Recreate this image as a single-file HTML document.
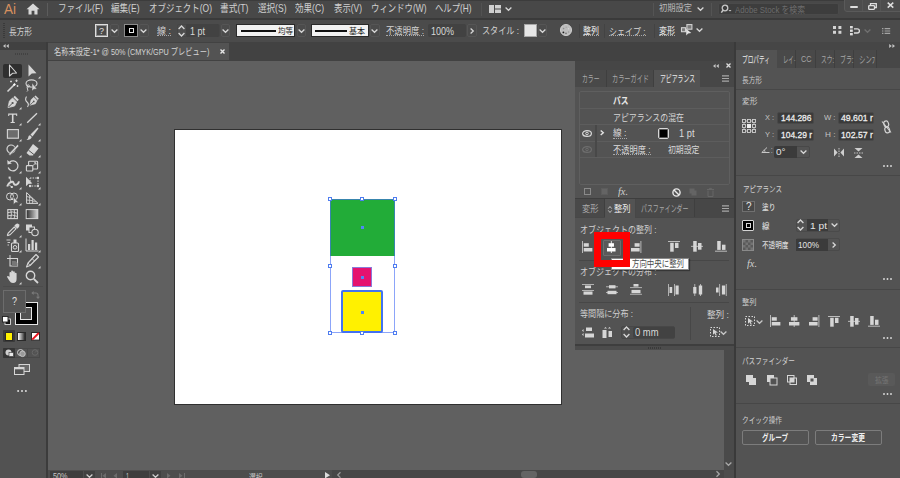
<!DOCTYPE html>
<html lang="ja"><head><meta charset="utf-8"><title>Illustrator</title>
<style>
*{box-sizing:border-box;margin:0;padding:0}
html,body{width:900px;height:478px;overflow:hidden;background:#606060}
body{position:relative;font-family:"Liberation Sans","Noto Sans CJK JP",sans-serif;font-size:10px;color:#d4d4d4}
.a{position:absolute}
.t{position:absolute;white-space:nowrap;transform-origin:0 50%;display:block}
svg{position:absolute;overflow:visible}
</style></head><body>

<div class="a" style="left:0px;top:0px;width:900px;height:20px;background:#484848;"></div>
<div class="a" style="left:0px;top:0px;width:900px;height:0.8px;background:#3c3c3c;"></div>
<div class="a" style="left:0px;top:18.3px;width:900px;height:1.5px;background:#3a3a3a;"></div>
<span class="t" style="left:4px;top:-0.68px;font-size:14.5px;line-height:21.75px;height:21.75px;color:#d8905f;transform:scaleX(0.9298);">Ai</span>
<svg style="left:26px;top:3px" width="14" height="12" viewBox="0 0 14 12"><path d="M7 0.5 L0.5 6.2 H2.5 V11.5 H5.6 V7.8 H8.4 V11.5 H11.5 V6.2 H13.5 Z" fill="#d8d8d8"/></svg>
<div class="a" style="left:47px;top:3.3px;width:1px;height:12.5px;background:#5c5c5c;"></div>
<div class="a" style="left:480.5px;top:3px;width:1px;height:13px;background:#525252;"></div>
<div class="a" style="left:553.5px;top:24px;width:1px;height:14px;background:#434343;"></div>
<span class="t" style="left:58px;top:0.62px;font-size:10.5px;line-height:15.75px;height:15.75px;color:#d0d0d0;transform:scaleX(0.8120);">ファイル(F)</span>
<span class="t" style="left:111px;top:0.62px;font-size:10.5px;line-height:15.75px;height:15.75px;color:#d0d0d0;transform:scaleX(0.8143);">編集(E)</span>
<span class="t" style="left:148.5px;top:0.62px;font-size:10.5px;line-height:15.75px;height:15.75px;color:#d0d0d0;transform:scaleX(0.8059);">オブジェクト(O)</span>
<span class="t" style="left:220px;top:0.62px;font-size:10.5px;line-height:15.75px;height:15.75px;color:#d0d0d0;transform:scaleX(0.8280);">書式(T)</span>
<span class="t" style="left:257.5px;top:0.62px;font-size:10.5px;line-height:15.75px;height:15.75px;color:#d0d0d0;transform:scaleX(0.8143);">選択(S)</span>
<span class="t" style="left:295px;top:0.62px;font-size:10.5px;line-height:15.75px;height:15.75px;color:#d0d0d0;transform:scaleX(0.8151);">効果(C)</span>
<span class="t" style="left:333.5px;top:0.62px;font-size:10.5px;line-height:15.75px;height:15.75px;color:#d0d0d0;transform:scaleX(0.8000);">表示(V)</span>
<span class="t" style="left:371px;top:0.62px;font-size:10.5px;line-height:15.75px;height:15.75px;color:#d0d0d0;transform:scaleX(0.7996);">ウィンドウ(W)</span>
<span class="t" style="left:435px;top:0.62px;font-size:10.5px;line-height:15.75px;height:15.75px;color:#d0d0d0;transform:scaleX(0.7921);">ヘルプ(H)</span>
<svg style="left:488.7px;top:3.6px" width="12" height="10" viewBox="0 0 12 10"><rect x="0" y="1" width="5" height="8" fill="#cfcfcf"/><rect x="6" y="1" width="6" height="3.5" fill="#cfcfcf"/><rect x="6" y="5.5" width="6" height="3.5" fill="#cfcfcf"/></svg>
<svg style="left:505.0px;top:6.6px" width="7" height="4" viewBox="0 0 7 4"><path d="M0.6 0.5 L3.5 3.3 L6.4 0.5" fill="none" stroke="#d8d8d8" stroke-width="1.25"/></svg>
<div class="a" style="left:653px;top:3px;width:1px;height:13px;background:#545454;"></div>
<span class="t" style="left:659px;top:1.85px;font-size:9px;line-height:13.5px;height:13.5px;color:#b8b8b8;transform:scaleX(0.9163);">初期設定</span>
<svg style="left:696.5px;top:7.199999999999999px" width="7" height="4" viewBox="0 0 7 4"><path d="M0.6 0.5 L3.5 3.3 L6.4 0.5" fill="none" stroke="#d8d8d8" stroke-width="1.25"/></svg>
<div class="a" style="left:711px;top:3px;width:1px;height:13px;background:#545454;"></div>
<div class="a" style="left:718px;top:2.8px;width:120.5px;height:12.2px;background:#3d3d3d;border-radius:2px;border:1px solid #4a4a4a"></div>
<svg style="left:721px;top:4px" width="11" height="10" viewBox="0 0 11 10"><circle cx="4" cy="4" r="2.8" fill="none" stroke="#c8c8c8" stroke-width="1.3"/><path d="M2 6.2 L0.3 8.6" stroke="#c8c8c8" stroke-width="1.5"/><path d="M7.5 6 L9 7.6 L10.5 6 Z" fill="#c8c8c8"/></svg>
<span class="t" style="left:735px;top:2.57px;font-size:9.5px;line-height:14.25px;height:14.25px;color:#6c6c6c;transform:scaleX(0.8234);">Adobe Stock を検索</span>
<div class="a" style="left:844px;top:-1px;width:57px;height:12.5px;background:#4d4d4d;border:1px solid #5a5a5a;border-radius:0 0 0 3px"></div>
<div class="a" style="left:862px;top:0px;width:1px;height:11px;background:#555;"></div>
<div class="a" style="left:880px;top:0px;width:1px;height:11px;background:#555;"></div>
<div class="a" style="left:850px;top:6.2px;width:7.5px;height:2.2px;background:#dedede;border-radius:1px"></div>
<svg style="left:867.5px;top:2.5px" width="9" height="7" viewBox="0 0 9 7"><path d="M2.5 2.3 V0.7 H8.3 V4.5 H6.5" fill="none" stroke="#dedede" stroke-width="1.3"/><rect x="0.7" y="2.6" width="5.8" height="3.8" rx="0.8" fill="none" stroke="#dedede" stroke-width="1.3"/></svg>
<svg style="left:887px;top:2px" width="7" height="6.2" viewBox="0 0 7 6.2"><path d="M0.7 0.6 L6.3 5.6 M6.3 0.6 L0.7 5.6" stroke="#dedede" stroke-width="1.5"/></svg>
<div class="a" style="left:0px;top:20px;width:900px;height:22px;background:#4b4b4b;"></div>
<div class="a" style="left:0px;top:41.6px;width:900px;height:1px;background:#3e3e3e;"></div>
<div class="a" style="left:3px;top:23px;width:2px;height:15px;background:repeating-linear-gradient(#3a3a3a 0 1px,transparent 1px 2px)"></div>
<span class="t" style="left:9px;top:24.57px;font-size:9.5px;line-height:14.25px;height:14.25px;color:#d0d0d0;transform:scaleX(0.8066);">長方形</span>
<div class="a" style="left:94.5px;top:23.8px;width:13.5px;height:13px;background:#4a4a4a;border:1px solid #dedede;box-shadow:inset 0 0 0 1px #8c8c8c"></div>
<span class="t" style="left:98.5px;top:23.57px;font-size:9.5px;line-height:14.25px;height:14.25px;color:#e0e0e0;transform:scaleX(0.9440);">?</span>
<div class="a" style="left:109.5px;top:24px;width:9.5px;height:13px;background:transparent;border:1px solid #555;border-radius:2px"></div>
<svg style="left:110.8px;top:29px" width="7" height="4" viewBox="0 0 7 4"><path d="M0.6 0.5 L3.5 3.3 L6.4 0.5" fill="none" stroke="#d8d8d8" stroke-width="1.25"/></svg>
<div class="a" style="left:124px;top:24px;width:14px;height:13px;background:#000;border:1px solid #8c8c8c"></div>
<div class="a" style="left:128.5px;top:28px;width:5px;height:5px;background:#000;border:1px solid #e8e8e8"></div>
<div class="a" style="left:139px;top:24px;width:9.5px;height:13px;background:transparent;border:1px solid #555;border-radius:2px"></div>
<svg style="left:140.3px;top:29px" width="7" height="4" viewBox="0 0 7 4"><path d="M0.6 0.5 L3.5 3.3 L6.4 0.5" fill="none" stroke="#d8d8d8" stroke-width="1.25"/></svg>
<span class="t" style="left:157px;top:24.55px;font-size:9px;line-height:13.5px;height:13.5px;color:#d4d4d4;transform:scaleX(0.9989);">線 :</span>
<div class="a" style="left:157px;top:34.8px;width:14px;height:0;border-top:1px dotted #a8a8a8"></div>
<div class="a" style="left:176.5px;top:24px;width:43px;height:13px;background:#4e4e4e;border:1px solid #464646;border-radius:2px"></div>
<svg style="left:177.8px;top:24.8px" width="7" height="12" viewBox="0 0 7 12"><path d="M0.6 4 L3.5 1 L6.4 4 M0.6 8 L3.5 11 L6.4 8" fill="none" stroke="#d8d8d8" stroke-width="1.3"/></svg>
<div class="a" style="left:186px;top:24px;width:33px;height:13px;background:#424242;border-radius:2px"></div>
<span class="t" style="left:190px;top:23.50px;font-size:10px;line-height:15.0px;height:15.0px;color:#d8d8d8;transform:scaleX(0.8989);">1 pt</span>
<div class="a" style="left:220.5px;top:24px;width:9.5px;height:13px;background:transparent;border:1px solid #555;border-radius:2px"></div>
<svg style="left:221.8px;top:29px" width="7" height="4" viewBox="0 0 7 4"><path d="M0.6 0.5 L3.5 3.3 L6.4 0.5" fill="none" stroke="#d8d8d8" stroke-width="1.25"/></svg>
<div class="a" style="left:236px;top:24px;width:59px;height:13px;background:#f2f2f2;border:1px solid #2a2a2a"></div>
<div class="a" style="left:241px;top:30px;width:35px;height:2px;background:#111;"></div>
<span class="t" style="left:278px;top:25.02px;font-size:8.5px;line-height:12.75px;height:12.75px;color:#222;transform:scaleX(0.8815);">均等</span>
<div class="a" style="left:296.5px;top:24px;width:9.5px;height:13px;background:transparent;border:1px solid #555;border-radius:2px"></div>
<svg style="left:297.8px;top:29px" width="7" height="4" viewBox="0 0 7 4"><path d="M0.6 0.5 L3.5 3.3 L6.4 0.5" fill="none" stroke="#d8d8d8" stroke-width="1.25"/></svg>
<div class="a" style="left:311px;top:24px;width:58px;height:13px;background:#f2f2f2;border:1px solid #2a2a2a"></div>
<div class="a" style="left:315px;top:30px;width:32px;height:1.5px;background:#111;"></div>
<span class="t" style="left:349px;top:25.02px;font-size:8.5px;line-height:12.75px;height:12.75px;color:#222;transform:scaleX(0.9403);">基本</span>
<div class="a" style="left:370px;top:24px;width:9.5px;height:13px;background:transparent;border:1px solid #555;border-radius:2px"></div>
<svg style="left:371.3px;top:29px" width="7" height="4" viewBox="0 0 7 4"><path d="M0.6 0.5 L3.5 3.3 L6.4 0.5" fill="none" stroke="#d8d8d8" stroke-width="1.25"/></svg>
<span class="t" style="left:385.5px;top:24.55px;font-size:9px;line-height:13.5px;height:13.5px;color:#d4d4d4;transform:scaleX(0.9265);">不透明度 :</span>
<div class="a" style="left:385.5px;top:34.8px;width:38.0px;height:0;border-top:1px dotted #a8a8a8"></div>
<div class="a" style="left:428px;top:24px;width:38px;height:13px;background:#424242;border-radius:2px"></div>
<span class="t" style="left:431px;top:23.50px;font-size:10px;line-height:15.0px;height:15.0px;color:#d8d8d8;transform:scaleX(0.8992);">100%</span>
<div class="a" style="left:467px;top:24px;width:10px;height:13px;background:transparent;border:1px solid #555;border-radius:2px"></div>
<svg style="left:470.3px;top:28px" width="4" height="6" viewBox="0 0 4 6"><path d="M0.6 0.5 L3.3 3 L0.6 5.5" fill="none" stroke="#d8d8d8" stroke-width="1.25"/></svg>
<span class="t" style="left:482px;top:23.88px;font-size:9.5px;line-height:14.25px;height:14.25px;color:#d4d4d4;transform:scaleX(0.8549);">スタイル :</span>
<div class="a" style="left:523.6px;top:24px;width:13.2px;height:13px;background:#e6e6e6;border:1px solid #a8a8a8"></div>
<div class="a" style="left:537.8px;top:24px;width:9.5px;height:13px;background:transparent;border:1px solid #555;border-radius:2px"></div>
<svg style="left:539.1px;top:29px" width="7" height="4" viewBox="0 0 7 4"><path d="M0.6 0.5 L3.5 3.3 L6.4 0.5" fill="none" stroke="#d8d8d8" stroke-width="1.25"/></svg>
<svg style="left:560px;top:24px" width="12" height="12" viewBox="0 0 12 12"><circle cx="6" cy="6" r="5.6" fill="#bdbdbd" stroke="#dadada" stroke-width="0.8"/><circle cx="3.4" cy="8.4" r="0.9" fill="#1c1c1c"/><circle cx="6" cy="9.4" r="0.8" fill="#6e6e6e"/><circle cx="8.6" cy="8" r="0.8" fill="#9a9a9a"/><circle cx="3.6" cy="4.6" r="0.8" fill="#8e8e8e"/><circle cx="6.2" cy="3.2" r="0.8" fill="#a8a8a8"/><circle cx="8.6" cy="4.8" r="0.7" fill="#d8d8d8"/></svg>
<span class="t" style="left:583px;top:25.15px;font-size:9px;line-height:13.5px;height:13.5px;color:#dcdcdc;font-weight:500;transform:scaleX(0.8881);">整列</span>
<div class="a" style="left:583px;top:35px;width:16px;height:0;border-top:1px dotted #a8a8a8"></div>
<span class="t" style="left:609px;top:24.57px;font-size:9.5px;line-height:14.25px;height:14.25px;color:#d8d8d8;transform:scaleX(0.8433);">シェイプ :</span>
<div class="a" style="left:609px;top:35px;width:36.5px;height:0;border-top:1px dotted #a8a8a8"></div>
<span class="t" style="left:659px;top:25.15px;font-size:9px;line-height:13.5px;height:13.5px;color:#dcdcdc;font-weight:500;transform:scaleX(0.8881);">変形</span>
<div class="a" style="left:659px;top:35px;width:16px;height:0;border-top:1px dotted #a8a8a8"></div>
<div class="a" style="left:578.5px;top:24px;width:1px;height:14px;background:#434343;"></div>
<div class="a" style="left:603.5px;top:24px;width:1px;height:14px;background:#434343;"></div>
<div class="a" style="left:654px;top:24px;width:1px;height:14px;background:#434343;"></div>
<svg style="left:681px;top:24.4px" width="11.5" height="11.5" viewBox="0 0 11.5 11.5"><rect x="0.5" y="3.7" width="4" height="4" fill="#7a7a7a" stroke="#d2d2d2" stroke-width="1.1"/><rect x="5.9" y="0.6" width="5" height="4.6" fill="#7a7a7a" stroke="#d2d2d2" stroke-width="1.1"/><path d="M5 4.8 L5.3 11.4 L7.1 9.6 L10.3 9.1 Z" fill="#e2e2e2"/></svg>
<svg style="left:695.5px;top:28.3px" width="7" height="4" viewBox="0 0 7 4"><path d="M0.6 0.5 L3.5 3.3 L6.4 0.5" fill="none" stroke="#d8d8d8" stroke-width="1.25"/></svg>
<svg style="left:833px;top:26.2px" width="8.4" height="7.8" viewBox="0 0 8.4 7.8"><rect x="0" y="0" width="3" height="3" fill="#d4d4d4"/><rect x="5.4" y="0" width="3" height="3" fill="#d4d4d4"/><rect x="0" y="4.8" width="3" height="3" fill="#d4d4d4"/><rect x="5.4" y="4.8" width="3" height="3" fill="#d4d4d4"/></svg>
<svg style="left:849.7px;top:25.8px" width="10" height="9.4" viewBox="0 0 10 9.4"><rect x="0" y="0" width="2.8" height="2.4" fill="#dcdcdc"/><rect x="0" y="3.5" width="2.8" height="2.4" fill="#dcdcdc"/><rect x="0" y="7" width="2.8" height="2.4" fill="#dcdcdc"/><path d="M4 2.8 H7.2 Q9.4 2.8 9.4 4.9 T7.2 7 H4" fill="none" stroke="#dcdcdc" stroke-width="1.3"/></svg>
<svg style="left:863.5px;top:28.5px" width="7" height="4" viewBox="0 0 7 4"><path d="M0.6 0.5 L3.5 3.3 L6.4 0.5" fill="none" stroke="#707070" stroke-width="1.25"/></svg>
<svg style="left:882px;top:27.6px" width="8.2" height="6" viewBox="0 0 8.2 6"><path d="M0 0.6 H1.4 M2.6 0.6 H8.2 M0 3 H1.4 M2.6 3 H8.2 M0 5.4 H1.4 M2.6 5.4 H8.2" stroke="#a4a4a4" stroke-width="1.1"/></svg>
<div class="a" style="left:46px;top:42px;width:690px;height:19px;background:#424242;"></div>
<div class="a" style="left:47.5px;top:42.5px;width:181.5px;height:17.5px;background:#535353;"></div>
<span class="t" style="left:54px;top:45.95px;font-size:9px;line-height:13.5px;height:13.5px;color:#d4d4d4;transform:scaleX(0.8071);">名称未設定-1* @ 50% (CMYK/GPU プレビュー)</span>
<svg style="left:219.8px;top:49.1px" width="5" height="5" viewBox="0 0 5 5"><path d="M0.5 0.5 L4.5 4.5 M4.5 0.5 L0.5 4.5" stroke="#e6e6e6" stroke-width="1.4"/></svg>
<div class="a" style="left:174px;top:129px;width:388px;height:276px;background:#fff;border:1px solid #303030"></div>
<div class="a" style="left:329.5px;top:199px;width:65.3px;height:57px;background:#22ac38;"></div>
<div class="a" style="left:351.6px;top:267px;width:20.8px;height:20.3px;background:#e5126f;border:1px solid #8a7ad8"></div>
<div class="a" style="left:340.8px;top:290.4px;width:42px;height:42.4px;background:#fff100;border:2px solid #4274f0;border-radius:2px"></div>
<div class="a" style="left:329.5px;top:199px;width:65.5px;height:134px;background:transparent;border:1px solid rgba(70,110,245,0.62)"></div>
<div class="a" style="left:328px;top:197px;width:4px;height:4px;background:#fff;border:1px solid #4f7df0"></div>
<div class="a" style="left:360px;top:197px;width:4px;height:4px;background:#fff;border:1px solid #4f7df0"></div>
<div class="a" style="left:392.5px;top:197px;width:4px;height:4px;background:#fff;border:1px solid #4f7df0"></div>
<div class="a" style="left:328px;top:264px;width:4px;height:4px;background:#fff;border:1px solid #4f7df0"></div>
<div class="a" style="left:392.5px;top:264px;width:4px;height:4px;background:#fff;border:1px solid #4f7df0"></div>
<div class="a" style="left:328px;top:330.5px;width:4px;height:4px;background:#fff;border:1px solid #4f7df0"></div>
<div class="a" style="left:360px;top:330.5px;width:4px;height:4px;background:#fff;border:1px solid #4f7df0"></div>
<div class="a" style="left:392.5px;top:330.5px;width:4px;height:4px;background:#fff;border:1px solid #4f7df0"></div>
<div class="a" style="left:360.5px;top:226.0px;width:3px;height:3px;background:#4f86f7;"></div>
<div class="a" style="left:360.5px;top:275.5px;width:3px;height:3px;background:#4f86f7;"></div>
<div class="a" style="left:360.5px;top:310.5px;width:3px;height:3px;background:#4f86f7;"></div>
<div class="a" style="left:723.5px;top:349px;width:10px;height:129px;background:#4a4a4a;"></div>
<svg style="left:725.0px;top:462px" width="7" height="4" viewBox="0 0 7 4"><path d="M0.6 0.5 L3.5 3.3 L6.4 0.5" fill="none" stroke="#a8a8a8" stroke-width="1.25"/></svg>
<div class="a" style="left:47px;top:469.5px;width:687px;height:8.5px;background:#4d4d4d;"></div>
<div class="a" style="left:332px;top:469.5px;width:391.5px;height:8.5px;background:#474747;"></div>
<div class="a" style="left:521px;top:471px;width:16px;height:7px;background:#646464;border-radius:3px"></div>
<div class="a" style="left:50px;top:471px;width:33px;height:7px;background:#3e3e3e;"></div>
<span class="t" style="left:52.5px;top:469.62px;font-size:8.5px;line-height:12.75px;height:12.75px;color:#c8c8c8;transform:scaleX(0.8522);">50%</span>
<div class="a" style="left:84px;top:471px;width:10.5px;height:7px;background:#414141;"></div>
<svg style="left:85.8px;top:474.3px" width="7" height="4" viewBox="0 0 7 4"><path d="M0.6 0.5 L3.5 3.3 L6.4 0.5" fill="none" stroke="#d0d0d0" stroke-width="1.25"/></svg>
<div class="a" style="left:123px;top:471px;width:26px;height:7px;background:#3e3e3e;"></div>
<span class="t" style="left:126px;top:469.62px;font-size:8.5px;line-height:12.75px;height:12.75px;color:#c8c8c8;transform:scaleX(0.6337);">1</span>
<div class="a" style="left:150px;top:471px;width:10.5px;height:7px;background:#414141;"></div>
<svg style="left:151.8px;top:474.3px" width="7" height="4" viewBox="0 0 7 4"><path d="M0.6 0.5 L3.5 3.3 L6.4 0.5" fill="none" stroke="#d0d0d0" stroke-width="1.25"/></svg>
<span class="t" style="left:248.5px;top:470.52px;font-size:8.5px;line-height:12.75px;height:12.75px;color:#c8c8c8;transform:scaleX(0.7934);">選択</span>
<svg style="left:324.5px;top:472px" width="5" height="6" viewBox="0 0 5 6"><path d="M0 0 L5 3.2 L0 6.4 Z" fill="#dcdcdc"/></svg>
<svg style="left:336.5px;top:472px" width="4" height="6" viewBox="0 0 4 6"><path d="M3.5 0.3 L0.7 3 L3.5 5.7" fill="none" stroke="#9a9a9a" stroke-width="1.2"/></svg>
<svg style="left:715.5px;top:471px" width="4" height="6" viewBox="0 0 4 6"><path d="M0.5 0.3 L3.3 3 L0.5 5.7" fill="none" stroke="#a8a8a8" stroke-width="1.2"/></svg>
<svg style="left:100.5px;top:472.5px" width="6" height="5.5" viewBox="0 0 6 5.5"><path d="M5 0 L1.5 2.75 L5 5.5 Z" fill="#6c6c6c"/></svg>
<svg style="left:112px;top:472.5px" width="6" height="5.5" viewBox="0 0 6 5.5"><path d="M5 0 L1.5 2.75 L5 5.5 Z" fill="#6c6c6c"/></svg>
<svg style="left:166px;top:472.5px" width="6" height="5.5" viewBox="0 0 6 5.5"><path d="M1 0 L4.5 2.75 L1 5.5 Z" fill="#6c6c6c"/></svg>
<svg style="left:177.5px;top:472.5px" width="6" height="5.5" viewBox="0 0 6 5.5"><path d="M1 0 L4.5 2.75 L1 5.5 Z" fill="#6c6c6c"/></svg>
<div class="a" style="left:100.5px;top:472.5px;width:1.2px;height:5.5px;background:#6c6c6c;"></div>
<div class="a" style="left:184px;top:472.5px;width:1.2px;height:5.5px;background:#6c6c6c;"></div>
<div class="a" style="left:0px;top:42px;width:46px;height:436px;background:#525252;"></div>
<div class="a" style="left:46px;top:42px;width:1.5px;height:436px;background:#3c3c3c;"></div>
<div class="a" style="left:0px;top:42px;width:46px;height:7.5px;background:#414141;"></div>
<svg style="left:3px;top:44px" width="6" height="4" viewBox="0 0 6 4"><path d="M2.6 0 V4 L0 2 Z M5.8 0 V4 L3.2 2 Z" fill="#c4c4c4"/></svg>
<div class="a" style="left:15px;top:53px;width:13px;height:2px;background:repeating-linear-gradient(90deg,#424242 0 1px,transparent 1px 2px)"></div>
<div class="a" style="left:3px;top:63.5px;width:18.5px;height:14.5px;background:#2f2f2f;border-radius:2px"></div>
<svg style="left:4.5px;top:62.5px" width="16" height="16" viewBox="0 0 16 16"><path d="M4.5 2 V13 L7.5 10.3 L11.5 10 Z" fill="none" stroke="#d6d6d6" stroke-width="1.1" stroke-linejoin="round"/></svg>
<svg style="left:24px;top:62.5px" width="16" height="16" viewBox="0 0 16 16"><path d="M4.5 1.5 V13.5 L7.8 10.5 L12.5 10.2 Z" fill="#d6d6d6"/></svg>
<svg style="left:38.3px;top:75.5px" width="2.5" height="2.5" viewBox="0 0 2.5 2.5"><path d="M2.5 0 V2.5 H0 Z" fill="#d6d6d6"/></svg>
<svg style="left:4.5px;top:78.4px" width="16" height="16" viewBox="0 0 16 16"><path d="M2.5 13.5 L9 7" fill="none" stroke="#d6d6d6" stroke-width="1.6"/><path d="M8.6 7.4 L10.2 5.8" stroke="#fff" stroke-width="2"/><path d="M11.5 1.5 V4 M10.2 2.8 H12.8 M6 2.5 V4.5 M5 3.5 H7 M12.5 7 V9 M11.5 8 H13.5" fill="none" stroke="#d6d6d6" stroke-width="0.9"/></svg>
<svg style="left:24px;top:78.4px" width="16" height="16" viewBox="0 0 16 16"><ellipse cx="7.5" cy="5.5" rx="5.5" ry="3.6" fill="none" stroke="#d6d6d6" stroke-width="1.1"/><path d="M4 8 Q2.5 9.5 3.5 11 T3 13.5" fill="none" stroke="#d6d6d6" stroke-width="1"/><circle cx="4.2" cy="8" r="1.2" fill="none" stroke="#d6d6d6" stroke-width="0.9"/><path d="M8 5 V13 L10 11.2 L13 11 Z" fill="#d6d6d6" stroke="#525252" stroke-width="0.5"/></svg>
<svg style="left:4.5px;top:94.3px" width="16" height="16" viewBox="0 0 16 16"><path d="M9.8 1.8 L13.8 5.8 L12.4 7.2 L8.4 3.2 Z" fill="#d6d6d6"/><path d="M7.6 4 L11.6 8 L9.6 12 L3 13.6 L4.4 7 Z" fill="#d6d6d6" stroke="#d6d6d6" stroke-width="0.8" stroke-linejoin="round"/><path d="M3.4 13.2 L7.2 9.4" stroke="#525252" stroke-width="1"/><circle cx="7.6" cy="9" r="1.1" fill="#525252"/></svg>
<svg style="left:18.8px;top:107.3px" width="2.5" height="2.5" viewBox="0 0 2.5 2.5"><path d="M2.5 0 V2.5 H0 Z" fill="#d6d6d6"/></svg>
<svg style="left:24px;top:94.3px" width="16" height="16" viewBox="0 0 16 16"><g transform="translate(3.5,0) scale(0.82)"><path d="M9.8 1.8 L13.8 5.8 L12.4 7.2 L8.4 3.2 Z" fill="#d6d6d6"/><path d="M7.6 4 L11.6 8 L9.6 12 L3 13.6 L4.4 7 Z" fill="#d6d6d6" stroke="#d6d6d6" stroke-width="0.8" stroke-linejoin="round"/><path d="M3.4 13.2 L7.2 9.4" stroke="#525252" stroke-width="1"/><circle cx="7.6" cy="9" r="1.1" fill="#525252"/></g><path d="M2.5 2.5 Q0.5 6 3 8 T3.5 13" fill="none" stroke="#d6d6d6" stroke-width="1.1"/></svg>
<svg style="left:4.5px;top:110.2px" width="16" height="16" viewBox="0 0 16 16"><path d="M3.2 3.6 H12.2 V6 H11.2 V4.8 H8.5 V12 H9.8 V13.1 H5.6 V12 H6.9 V4.8 H4.2 V6 H3.2 Z" fill="#d6d6d6"/></svg>
<svg style="left:18.8px;top:123.2px" width="2.5" height="2.5" viewBox="0 0 2.5 2.5"><path d="M2.5 0 V2.5 H0 Z" fill="#d6d6d6"/></svg>
<svg style="left:24px;top:110.2px" width="16" height="16" viewBox="0 0 16 16"><path d="M3.2 12.8 L13 3.2" fill="none" stroke="#d6d6d6" stroke-width="1.3"/></svg>
<svg style="left:38.3px;top:123.2px" width="2.5" height="2.5" viewBox="0 0 2.5 2.5"><path d="M2.5 0 V2.5 H0 Z" fill="#d6d6d6"/></svg>
<svg style="left:4.5px;top:126.1px" width="16" height="16" viewBox="0 0 16 16"><rect x="2.4" y="3.6" width="11" height="8.6" fill="#6c6c6c" stroke="#d6d6d6" stroke-width="1.1"/></svg>
<svg style="left:18.8px;top:139.1px" width="2.5" height="2.5" viewBox="0 0 2.5 2.5"><path d="M2.5 0 V2.5 H0 Z" fill="#d6d6d6"/></svg>
<svg style="left:24px;top:126.1px" width="16" height="16" viewBox="0 0 16 16"><path d="M13.5 1.5 L14.5 2.5 L8.5 10.5 L6.5 8.5 Z" fill="#d6d6d6"/><path d="M6 9.2 L7.8 11 Q7 14 2.5 14 Q4.5 12.5 4.3 11 Q4.5 9.5 6 9.2 Z" fill="#d6d6d6"/></svg>
<svg style="left:38.3px;top:139.1px" width="2.5" height="2.5" viewBox="0 0 2.5 2.5"><path d="M2.5 0 V2.5 H0 Z" fill="#d6d6d6"/></svg>
<svg style="left:4.5px;top:142.0px" width="16" height="16" viewBox="0 0 16 16"><circle cx="6" cy="7" r="4" fill="none" stroke="#d6d6d6" stroke-width="1.2"/><path d="M5 13.5 L14 4 L12.5 2.5 L3.5 12 Z" fill="#d6d6d6" stroke="#525252" stroke-width="0.6"/></svg>
<svg style="left:18.8px;top:155.0px" width="2.5" height="2.5" viewBox="0 0 2.5 2.5"><path d="M2.5 0 V2.5 H0 Z" fill="#d6d6d6"/></svg>
<svg style="left:24px;top:142.0px" width="16" height="16" viewBox="0 0 16 16"><path d="M9 2 L14.5 6.5 L9 13.5 H5.5 L2.5 11 Z" fill="#d6d6d6"/><path d="M4.5 8.2 L10 12.6" stroke="#525252" stroke-width="1"/></svg>
<svg style="left:38.3px;top:155.0px" width="2.5" height="2.5" viewBox="0 0 2.5 2.5"><path d="M2.5 0 V2.5 H0 Z" fill="#d6d6d6"/></svg>
<svg style="left:4.5px;top:157.9px" width="16" height="16" viewBox="0 0 16 16"><path d="M4.6 4.2 A5 5 0 1 1 3.2 9.5" fill="none" stroke="#d6d6d6" stroke-width="1.2"/><path d="M2.2 2 L2.6 6.4 L6.8 5.4 Z" fill="#d6d6d6"/></svg>
<svg style="left:18.8px;top:170.9px" width="2.5" height="2.5" viewBox="0 0 2.5 2.5"><path d="M2.5 0 V2.5 H0 Z" fill="#d6d6d6"/></svg>
<svg style="left:24px;top:157.9px" width="16" height="16" viewBox="0 0 16 16"><rect x="4.6" y="3.2" width="9" height="7.8" rx="0.8" fill="none" stroke="#d6d6d6" stroke-width="1.1"/><rect x="2.4" y="7.6" width="6.4" height="5.4" rx="0.8" fill="#525252" stroke="#d6d6d6" stroke-width="1.1"/><path d="M9 7.5 L12 4.8 M10 4.8 H12 V6.8" fill="none" stroke="#d6d6d6" stroke-width="0.9"/></svg>
<svg style="left:38.3px;top:170.9px" width="2.5" height="2.5" viewBox="0 0 2.5 2.5"><path d="M2.5 0 V2.5 H0 Z" fill="#d6d6d6"/></svg>
<svg style="left:4.5px;top:173.8px" width="16" height="16" viewBox="0 0 16 16"><path d="M2.2 12.6 Q3 9.5 5.6 8.2 Q8.2 7 8.6 9 Q9.2 11.4 11.6 10.6 Q13.6 9.8 14 7.4" fill="none" stroke="#d6d6d6" stroke-width="2"/><path d="M4.6 3.4 L6.2 8 M3 10 L6.6 12.8" fill="none" stroke="#d6d6d6" stroke-width="0.8"/><rect x="3.6" y="2.6" width="2" height="2" fill="#d6d6d6"/><rect x="5.8" y="12" width="2" height="2" fill="#d6d6d6"/><circle cx="6" cy="8" r="1.2" fill="#d6d6d6"/></svg>
<svg style="left:18.8px;top:186.8px" width="2.5" height="2.5" viewBox="0 0 2.5 2.5"><path d="M2.5 0 V2.5 H0 Z" fill="#d6d6d6"/></svg>
<svg style="left:24px;top:173.8px" width="16" height="16" viewBox="0 0 16 16"><rect x="6" y="4" width="8" height="8" fill="none" stroke="#d6d6d6" stroke-width="1" stroke-dasharray="1.5 1.1"/><path d="M2 2.8 V12.2 L4.6 9.8 L8.4 9.5 Z" fill="#d6d6d6"/><rect x="12.8" y="2.8" width="2.2" height="2.2" fill="#d6d6d6"/><rect x="12.8" y="10.9" width="2.2" height="2.2" fill="#d6d6d6"/><rect x="5" y="10.9" width="2.2" height="2.2" fill="#d6d6d6"/></svg>
<svg style="left:38.3px;top:186.8px" width="2.5" height="2.5" viewBox="0 0 2.5 2.5"><path d="M2.5 0 V2.5 H0 Z" fill="#d6d6d6"/></svg>
<svg style="left:4.5px;top:189.7px" width="16" height="16" viewBox="0 0 16 16"><circle cx="5" cy="6.5" r="3.5" fill="none" stroke="#d6d6d6" stroke-width="1"/><circle cx="9" cy="6.5" r="3.5" fill="none" stroke="#d6d6d6" stroke-width="1"/><path d="M8.5 7 V14.5 L10.5 12.6 L13.5 12.4 Z" fill="#d6d6d6" stroke="#525252" stroke-width="0.5"/></svg>
<svg style="left:18.8px;top:202.7px" width="2.5" height="2.5" viewBox="0 0 2.5 2.5"><path d="M2.5 0 V2.5 H0 Z" fill="#d6d6d6"/></svg>
<svg style="left:24px;top:189.7px" width="16" height="16" viewBox="0 0 16 16"><path d="M2.6 2.6 V13.4 H14 Z" fill="none" stroke="#d6d6d6" stroke-width="1"/><path d="M2.6 6.4 L8.4 8.2 M2.6 10 L8.4 10.6 M5.6 5.4 V13.4 M8.4 8 V13.4" fill="none" stroke="#d6d6d6" stroke-width="0.8"/><path d="M8.4 10 H10.6 M8.4 11.7 H12.4" fill="none" stroke="#d6d6d6" stroke-width="0.7"/></svg>
<svg style="left:38.3px;top:202.7px" width="2.5" height="2.5" viewBox="0 0 2.5 2.5"><path d="M2.5 0 V2.5 H0 Z" fill="#d6d6d6"/></svg>
<svg style="left:4.5px;top:205.6px" width="16" height="16" viewBox="0 0 16 16"><rect x="2.8" y="3.6" width="9.6" height="9" fill="none" stroke="#d6d6d6" stroke-width="1.1"/><path d="M2.8 6.6 Q7.5 5 12.4 7.2 M2.8 9.8 Q7.5 8.2 12.4 10.4 M5.8 3.6 Q7 8 5.8 12.6 M9.2 3.6 Q10.4 8 9.2 12.6" fill="none" stroke="#d6d6d6" stroke-width="0.9"/></svg>
<svg style="left:24px;top:205.6px" width="16" height="16" viewBox="0 0 16 16"><defs><linearGradient id="gr1"><stop offset="0" stop-color="#2c2c2c"/><stop offset="1" stop-color="#dadada"/></linearGradient></defs><rect x="2.2" y="3.6" width="11.6" height="9" fill="url(#gr1)" stroke="#d6d6d6" stroke-width="1"/></svg>
<svg style="left:4.5px;top:221.5px" width="16" height="16" viewBox="0 0 16 16"><path d="M11 2 Q12.5 0.8 13.8 2.2 Q15 3.5 14 5 L12.3 6.7 L9.3 3.7 Z" fill="#d6d6d6"/><path d="M9.2 5 L11 6.8 L5 12.8 L2.8 13.6 L2.4 13.2 L3.2 11 Z" fill="none" stroke="#d6d6d6" stroke-width="1.1"/></svg>
<svg style="left:18.8px;top:234.5px" width="2.5" height="2.5" viewBox="0 0 2.5 2.5"><path d="M2.5 0 V2.5 H0 Z" fill="#d6d6d6"/></svg>
<svg style="left:24px;top:221.5px" width="16" height="16" viewBox="0 0 16 16"><rect x="2" y="2.5" width="6" height="6" fill="#d6d6d6"/><rect x="5" y="5" width="5.5" height="5.5" fill="#525252" stroke="#d6d6d6" stroke-width="1"/><circle cx="11" cy="10.5" r="3.2" fill="#525252" stroke="#d6d6d6" stroke-width="1.1"/></svg>
<svg style="left:4.5px;top:237.4px" width="16" height="16" viewBox="0 0 16 16"><rect x="6.5" y="6" width="7" height="8.5" rx="1" fill="none" stroke="#d6d6d6" stroke-width="1.1"/><rect x="8.5" y="2.5" width="3" height="3.5" fill="#d6d6d6"/><circle cx="10" cy="10.3" r="1.8" fill="none" stroke="#d6d6d6" stroke-width="1"/><path d="M1.5 3 H5.5 M2.5 5.5 H5 M2.5 8 H4" fill="none" stroke="#d6d6d6" stroke-width="0.9"/></svg>
<svg style="left:18.8px;top:250.4px" width="2.5" height="2.5" viewBox="0 0 2.5 2.5"><path d="M2.5 0 V2.5 H0 Z" fill="#d6d6d6"/></svg>
<svg style="left:24px;top:237.4px" width="16" height="16" viewBox="0 0 16 16"><path d="M2 1.5 V14 H14.5" fill="none" stroke="#d6d6d6" stroke-width="1"/><rect x="4" y="7" width="2.2" height="6" fill="#d6d6d6"/><rect x="7.5" y="3" width="2.2" height="10" fill="#d6d6d6"/><rect x="11" y="5.5" width="2.2" height="7.5" fill="#d6d6d6"/></svg>
<svg style="left:38.3px;top:250.4px" width="2.5" height="2.5" viewBox="0 0 2.5 2.5"><path d="M2.5 0 V2.5 H0 Z" fill="#d6d6d6"/></svg>
<svg style="left:4.5px;top:253.3px" width="16" height="16" viewBox="0 0 16 16"><path d="M5 2 V5.5 M2 5.5 H5" fill="none" stroke="#d6d6d6" stroke-width="1"/><path d="M5 5.5 H12.5 V13 H5 Z" fill="none" stroke="#d6d6d6" stroke-width="1.1"/><path d="M7 8 H10.5 L12.5 10 V13 H7 Z" fill="#777"/></svg>
<svg style="left:24px;top:253.3px" width="16" height="16" viewBox="0 0 16 16"><path d="M12 1.5 L14.5 4 L6 12.5 L2.5 14 L4 10 Z" fill="none" stroke="#d6d6d6" stroke-width="1.1" stroke-linejoin="round"/><path d="M4 10 L6 12.5" fill="none" stroke="#d6d6d6" stroke-width="0.9"/><path d="M8 5.5 L10.5 8" fill="none" stroke="#d6d6d6" stroke-width="0.9"/></svg>
<svg style="left:38.3px;top:266.3px" width="2.5" height="2.5" viewBox="0 0 2.5 2.5"><path d="M2.5 0 V2.5 H0 Z" fill="#d6d6d6"/></svg>
<svg style="left:4.5px;top:269.20000000000005px" width="16" height="16" viewBox="0 0 16 16"><path d="M4.5 8 V4 Q4.5 3 5.4 3 Q6.2 3 6.2 4 V2.6 Q6.2 1.6 7.1 1.6 Q8 1.6 8 2.6 V3.2 Q8 2.3 8.9 2.3 Q9.8 2.3 9.8 3.3 V4.5 Q9.8 3.7 10.7 3.7 Q11.6 3.7 11.6 4.7 V10 Q11.6 14 8 14 Q5.6 14 4.4 11.8 L2.2 8.3 Q1.8 7.4 2.6 7 Q3.4 6.7 4 7.5 Z" fill="#d6d6d6"/></svg>
<svg style="left:18.8px;top:282.20000000000005px" width="2.5" height="2.5" viewBox="0 0 2.5 2.5"><path d="M2.5 0 V2.5 H0 Z" fill="#d6d6d6"/></svg>
<svg style="left:24px;top:269.20000000000005px" width="16" height="16" viewBox="0 0 16 16"><circle cx="6.5" cy="6.5" r="4.2" fill="none" stroke="#d6d6d6" stroke-width="1.4"/><path d="M9.8 9.8 L14 14" fill="none" stroke="#d6d6d6" stroke-width="1.8"/></svg>
<div class="a" style="left:3px;top:286px;width:40px;height:1px;background:#4b4b4b;"></div>
<div class="a" style="left:14.5px;top:302px;width:23.5px;height:23px;background:#000;border:1px solid #e6e6e6"></div>
<div class="a" style="left:19.8px;top:307.4px;width:12.4px;height:12.5px;background:#525252;border:1px solid #e6e6e6"></div>
<div class="a" style="left:2.5px;top:290px;width:23px;height:22.5px;background:#555555;border:1px solid #6c6c6c"></div>
<span class="t" style="left:11.5px;top:293.25px;font-size:11px;line-height:16.5px;height:16.5px;color:#e4e4e4;transform:scaleX(0.8163);">?</span>
<svg style="left:31px;top:289.5px" width="9" height="9" viewBox="0 0 9 9"><path d="M2 3 H5 Q7 3 7 5 V7.5" fill="none" stroke="#7a7a7a" stroke-width="1.1"/><path d="M0.3 3 L2.6 1 V5 Z M7 9 L5 6.8 H9 Z" fill="#7a7a7a"/></svg>
<svg style="left:2px;top:316px" width="9" height="9" viewBox="0 0 9 9"><rect x="3" y="3" width="5.5" height="5.5" fill="#111" stroke="#e0e0e0" stroke-width="0.9"/><rect x="0.5" y="0.5" width="5.5" height="5.5" fill="#fff" stroke="#222" stroke-width="0.9"/></svg>
<div class="a" style="left:3.2px;top:330.4px;width:11.6px;height:11.8px;background:#3a3a3a;border-radius:1px"></div>
<div class="a" style="left:4.6px;top:332px;width:8.6px;height:8.6px;background:#fff100;border:1px solid #2a2a2a"></div>
<div class="a" style="left:17.4px;top:332px;width:8.8px;height:8.6px;background:linear-gradient(90deg,#fff,#222);border:1px solid #2a2a2a"></div>
<svg style="left:30.8px;top:332px" width="9" height="8.6" viewBox="0 0 9 8.6"><rect x="0.5" y="0.5" width="8" height="7.6" fill="#fff" stroke="#2a2a2a" stroke-width="1"/><path d="M1.2 7.6 L7.8 1" stroke="#e8141e" stroke-width="1.9"/></svg>
<div class="a" style="left:3px;top:347.5px;width:37px;height:10px;background:transparent;border:1px solid #484848"></div>
<div class="a" style="left:3px;top:347.5px;width:11.5px;height:10px;background:#353535;border-radius:1px"></div>
<div class="a" style="left:27px;top:347.5px;width:1px;height:10px;background:#484848;"></div>
<svg style="left:4.5px;top:348.5px" width="9" height="8" viewBox="0 0 9 8"><circle cx="3.5" cy="3.5" r="3" fill="#cfcfcf"/><rect x="4" y="3.5" width="4.5" height="4" fill="#e8e8e8" stroke="#353535" stroke-width="0.6"/></svg>
<svg style="left:17px;top:348.5px" width="9" height="8" viewBox="0 0 9 8"><circle cx="3.5" cy="3.5" r="3" fill="none" stroke="#cfcfcf" stroke-width="1"/><circle cx="5.5" cy="4.8" r="2.8" fill="#9a9a9a" stroke="#cfcfcf" stroke-width="0.8"/></svg>
<svg style="left:30.5px;top:349px" width="8" height="7" viewBox="0 0 8 7"><circle cx="4" cy="3.5" r="2.8" fill="none" stroke="#686868" stroke-width="1"/><path d="M4 3.5 L6 1.5" stroke="#686868" stroke-width="1"/></svg>
<svg style="left:14px;top:364px" width="16" height="11" viewBox="0 0 16 11"><rect x="5" y="0.5" width="10.5" height="7" fill="#6a6a6a" stroke="#d6d6d6" stroke-width="1"/><rect x="0.5" y="3.5" width="9.5" height="7" fill="#525252" stroke="#d6d6d6" stroke-width="1"/><rect x="0.5" y="3.5" width="9.5" height="1.8" fill="#d6d6d6"/></svg>
<svg style="left:17px;top:389.5px" width="10" height="2" viewBox="0 0 10 2"><circle cx="1.1" cy="1" r="1" fill="#dcdcdc"/><circle cx="5" cy="1" r="1" fill="#dcdcdc"/><circle cx="8.9" cy="1" r="1" fill="#dcdcdc"/></svg>
<div class="a" style="left:575px;top:61px;width:158.5px;height:288.5px;background:#535353;"></div>
<div class="a" style="left:575px;top:61px;width:158.5px;height:8.5px;background:#464646;"></div>
<svg style="left:713px;top:63.5px" width="6" height="4" viewBox="0 0 6 4"><path d="M2.6 0 V4 L0 2 Z M5.8 0 V4 L3.2 2 Z" fill="#c4c4c4"/></svg>
<svg style="left:725.5px;top:63px" width="5" height="5" viewBox="0 0 5 5"><path d="M0.5 0.5 L4.5 4.5 M4.5 0.5 L0.5 4.5" stroke="#dcdcdc" stroke-width="1.3"/></svg>
<div class="a" style="left:575px;top:69.5px;width:158.5px;height:17.5px;background:#474747;"></div>
<div class="a" style="left:575px;top:69.5px;width:30.5px;height:17.5px;background:#494949;"></div>
<div class="a" style="left:606.5px;top:69.5px;width:46px;height:17.5px;background:#494949;"></div>
<div class="a" style="left:605.5px;top:69.5px;width:1px;height:17.5px;background:#3f3f3f;"></div>
<div class="a" style="left:652.5px;top:69.5px;width:1px;height:17.5px;background:#3f3f3f;"></div>
<div class="a" style="left:653.5px;top:69.5px;width:46px;height:18px;background:#535353;"></div>
<span class="t" style="left:582px;top:71.88px;font-size:9.5px;line-height:14.25px;height:14.25px;color:#a8a8a8;transform:scaleX(0.6137);">カラー</span>
<span class="t" style="left:611.5px;top:71.88px;font-size:9.5px;line-height:14.25px;height:14.25px;color:#a8a8a8;transform:scaleX(0.6489);">カラーガイド</span>
<span class="t" style="left:659.5px;top:71.88px;font-size:9.5px;line-height:14.25px;height:14.25px;color:#ececec;transform:scaleX(0.6161);">アピアランス</span>
<svg style="left:722px;top:75px" width="7" height="7" viewBox="0 0 7 7"><path d="M0 0.9 H7 M0 3.5 H7 M0 6.1 H7" stroke="#a8a8a8" stroke-width="1.1"/></svg>
<div class="a" style="left:579px;top:90.5px;width:151px;height:94px;background:#535353;border:1px solid #5f5f5f;border-radius:2px"></div>
<div class="a" style="left:580px;top:107.5px;width:149px;height:1px;background:#5d5d5d;"></div>
<div class="a" style="left:580px;top:124.3px;width:149px;height:1px;background:#5d5d5d;"></div>
<div class="a" style="left:580px;top:140.7px;width:149px;height:1px;background:#5d5d5d;"></div>
<div class="a" style="left:580px;top:157px;width:149px;height:1px;background:#5d5d5d;"></div>
<div class="a" style="left:595px;top:125.3px;width:1.7px;height:31.7px;background:#484848;"></div>
<span class="t" style="left:613px;top:93.88px;font-size:9.5px;line-height:14.25px;height:14.25px;color:#e6e6e6;font-weight:700;transform:scaleX(0.8151);">パス</span>
<span class="t" style="left:613px;top:111.17px;font-size:9.5px;line-height:14.25px;height:14.25px;color:#d6d6d6;transform:scaleX(0.8322);">アピアランスの混在</span>
<svg style="left:582.3px;top:129.7px" width="10" height="7" viewBox="0 0 10 7"><ellipse cx="5" cy="3.5" rx="4.4" ry="2.9" fill="none" stroke="#d8d8d8" stroke-width="1.2"/><circle cx="5" cy="3.5" r="1.3" fill="none" stroke="#d8d8d8" stroke-width="1"/></svg>
<svg style="left:599.5px;top:130px" width="4" height="5.6" viewBox="0 0 4 5.6"><path d="M0.7 0.5 L3.3 2.8 L0.7 5.1" fill="none" stroke="#e4e4e4" stroke-width="1.4"/></svg>
<span class="t" style="left:613px;top:126.95px;font-size:9px;line-height:13.5px;height:13.5px;color:#dcdcdc;transform:scaleX(0.9632);">線 :</span>
<div class="a" style="left:613px;top:138px;width:13.5px;height:0;border-top:1px dotted #a8a8a8"></div>
<div class="a" style="left:657.5px;top:127.5px;width:11.5px;height:11.5px;background:#000;border:1px solid #d8d8d8;border-radius:2px;box-shadow:inset 0 0 0 1px #555"></div>
<span class="t" style="left:679px;top:125.70px;font-size:10px;line-height:15.0px;height:15.0px;color:#dcdcdc;transform:scaleX(0.9288);">1 pt</span>
<svg style="left:582.3px;top:146px" width="10" height="7" viewBox="0 0 10 7"><ellipse cx="5" cy="3.5" rx="4.4" ry="2.9" fill="none" stroke="#6e6e6e" stroke-width="1.2"/><circle cx="5" cy="3.5" r="1.3" fill="none" stroke="#6e6e6e" stroke-width="1"/></svg>
<span class="t" style="left:613px;top:144.05px;font-size:9px;line-height:13.5px;height:13.5px;color:#dcdcdc;transform:scaleX(0.9143);">不透明度 :</span>
<div class="a" style="left:613px;top:154.3px;width:37.5px;height:0;border-top:1px dotted #a8a8a8"></div>
<span class="t" style="left:668px;top:143.07px;font-size:9.5px;line-height:14.25px;height:14.25px;color:#d6d6d6;transform:scaleX(0.8286);">初期設定</span>
<div class="a" style="left:583.5px;top:188px;width:7px;height:7px;background:transparent;border:1px solid #8a8a8a"></div>
<div class="a" style="left:600.5px;top:188px;width:7px;height:7px;background:#646464;border:1px solid #5c5c5c"></div>
<span class="t" style="left:617.5px;top:184.00px;font-size:10px;line-height:15.0px;height:15.0px;color:#d0d0d0;font-family:'Liberation Serif',serif;transform:scaleX(1.0289);font-style:italic">fx.</span>
<svg style="left:671.5px;top:187.5px" width="9" height="9" viewBox="0 0 9 9"><circle cx="4.5" cy="4.5" r="3.6" fill="none" stroke="#e8e8e8" stroke-width="1.4"/><path d="M2 2 L7 7" stroke="#e8e8e8" stroke-width="1.4"/></svg>
<svg style="left:689px;top:188px" width="8" height="8" viewBox="0 0 8 8"><path d="M0.5 0.5 H5.5 V2.5 H7.5 V7.5 H2.5 V5.5 H0.5 Z" fill="#646464"/></svg>
<svg style="left:707px;top:187.5px" width="7" height="9" viewBox="0 0 7 9"><path d="M0 1.5 H7 M2.3 1.5 V0.4 H4.7 V1.5 M1 2.5 V8.5 H6 V2.5" fill="none" stroke="#666" stroke-width="1"/></svg>
<div class="a" style="left:575px;top:198px;width:158.5px;height:1px;background:#3e3e3e;"></div>
<div class="a" style="left:575px;top:199px;width:158.5px;height:18.5px;background:#474747;"></div>
<div class="a" style="left:575px;top:199px;width:28.5px;height:18px;background:#494949;"></div>
<div class="a" style="left:635.5px;top:199px;width:58px;height:18px;background:#494949;"></div>
<div class="a" style="left:603.5px;top:199px;width:1px;height:18px;background:#3f3f3f;"></div>
<div class="a" style="left:693.5px;top:199px;width:1px;height:18px;background:#3f3f3f;"></div>
<div class="a" style="left:604.5px;top:199px;width:30.5px;height:18.5px;background:#535353;"></div>
<span class="t" style="left:581.5px;top:202.07px;font-size:9.5px;line-height:14.25px;height:14.25px;color:#a8a8a8;transform:scaleX(0.8677);">変形</span>
<svg style="left:607.5px;top:205.5px" width="4" height="7" viewBox="0 0 4 7"><path d="M0.3 2.6 L2 0.5 L3.7 2.6 M0.3 4.4 L2 6.5 L3.7 4.4" fill="none" stroke="#c8c8c8" stroke-width="0.9"/></svg>
<span class="t" style="left:613.5px;top:202.07px;font-size:9.5px;line-height:14.25px;height:14.25px;color:#ececec;transform:scaleX(0.8677);">整列</span>
<span class="t" style="left:640.5px;top:202.07px;font-size:9.5px;line-height:14.25px;height:14.25px;color:#a8a8a8;transform:scaleX(0.6249);">パスファインダー</span>
<svg style="left:722px;top:205px" width="7" height="7" viewBox="0 0 7 7"><path d="M0 0.9 H7 M0 3.5 H7 M0 6.1 H7" stroke="#a8a8a8" stroke-width="1.1"/></svg>
<span class="t" style="left:579.5px;top:222.57px;font-size:9.5px;line-height:14.25px;height:14.25px;color:#d0d0d0;transform:scaleX(0.8427);">オブジェクトの整列 :</span>
<svg style="left:582.31px;top:241.3px" width="10.38" height="12" viewBox="0 0 10.38 12"><rect x="0.0" y="0" width="0.97" height="12" fill="#bdbdbd"/><rect x="1.746" y="7" width="8.633000000000001" height="3.5" fill="#d6d6d6"/><rect x="1.746" y="2.2" width="5.044" height="3.5" fill="#d6d6d6"/></svg>
<div class="a" style="left:603px;top:239.5px;width:17.5px;height:16.5px;background:#5a5a5a;border:1px solid #6e6e6e;border-radius:1px"></div>
<svg style="left:607.02px;top:241.3px" width="8.56" height="12" viewBox="0 0 8.56 12"><rect x="3.88" y="0" width="0.8" height="12" fill="#fff"/><rect x="0.0" y="7" width="8.56" height="3.5" fill="#fff"/><rect x="1.6" y="2.2" width="5.36" height="3.5" fill="#fff"/></svg>
<svg style="left:630.81px;top:241.3px" width="10.38" height="12" viewBox="0 0 10.38 12"><rect x="9.408999999999999" y="0" width="0.97" height="12" fill="#bdbdbd"/><rect x="0.0" y="7" width="8.633000000000001" height="3.5" fill="#d6d6d6"/><rect x="3.589" y="2.2" width="5.044" height="3.5" fill="#d6d6d6"/></svg>
<svg style="left:667.8px;top:241.45px" width="12" height="10.7" viewBox="0 0 12 10.7"><rect x="0" y="0" width="12" height="1" fill="#bdbdbd"/><rect x="2.2" y="1.8" width="3.5" height="8.9" fill="#d6d6d6"/><rect x="7" y="1.8" width="3.5" height="5.2" fill="#d6d6d6"/></svg>
<svg style="left:691.0px;top:241.45px" width="12" height="10.7" viewBox="0 0 12 10.7"><rect x="0" y="4.85" width="12" height="1" fill="#bdbdbd"/><rect x="2.2" y="0" width="3.5" height="10.7" fill="#d6d6d6"/><rect x="7" y="2" width="3.5" height="6.7" fill="#d6d6d6"/></svg>
<svg style="left:715.0px;top:241.45px" width="12" height="10.7" viewBox="0 0 12 10.7"><rect x="0" y="9.7" width="12" height="1" fill="#bdbdbd"/><rect x="2.2" y="0" width="3.5" height="8.9" fill="#d6d6d6"/><rect x="7" y="3.7" width="3.5" height="5.2" fill="#d6d6d6"/></svg>
<svg style="left:582.0px;top:284.15px" width="12" height="10.7" viewBox="0 0 12 10.7"><rect x="0" y="0" width="12" height="0.9" fill="#bdbdbd"/><rect x="3" y="1.5" width="6" height="2.7" fill="#d6d6d6"/><rect x="0" y="6" width="12" height="0.9" fill="#bdbdbd"/><rect x="1.5" y="7.5" width="9" height="3.2" fill="#d6d6d6"/></svg>
<svg style="left:605.5px;top:284.15px" width="12" height="10.7" viewBox="0 0 12 10.7"><rect x="0" y="2.35" width="12" height="0.9" fill="#bdbdbd"/><rect x="3" y="1.2" width="6.5" height="3.2" fill="#d6d6d6"/><rect x="0" y="8" width="12" height="0.9" fill="#bdbdbd"/><rect x="1.5" y="6.8" width="9" height="3.4" fill="#d6d6d6"/></svg>
<svg style="left:629.5px;top:283.95px" width="12" height="10.7" viewBox="0 0 12 10.7"><rect x="3.5" y="0" width="5" height="2.6" fill="#d6d6d6"/><rect x="0" y="3.2" width="12" height="0.9" fill="#bdbdbd"/><rect x="1.5" y="5.9" width="9" height="3.3" fill="#d6d6d6"/><rect x="0" y="9.8" width="12" height="0.9" fill="#bdbdbd"/></svg>
<svg style="left:668.35px;top:283.7px" width="10.7" height="12" viewBox="0 0 10.7 12"><rect x="0" y="0" width="0.9" height="12" fill="#bdbdbd"/><rect x="1.5" y="3" width="2.7" height="6" fill="#d6d6d6"/><rect x="6" y="0" width="0.9" height="12" fill="#bdbdbd"/><rect x="7.5" y="1.5" width="3.2" height="9" fill="#d6d6d6"/></svg>
<svg style="left:691.65px;top:283.7px" width="10.7" height="12" viewBox="0 0 10.7 12"><rect x="2.35" y="0" width="0.9" height="12" fill="#bdbdbd"/><rect x="1.2" y="3" width="3.2" height="6.5" fill="#d6d6d6"/><rect x="8" y="0" width="0.9" height="12" fill="#bdbdbd"/><rect x="6.8" y="1.5" width="3.4" height="9" fill="#d6d6d6"/></svg>
<svg style="left:715.65px;top:283.7px" width="10.7" height="12" viewBox="0 0 10.7 12"><rect x="0" y="3.5" width="2.6" height="5" fill="#d6d6d6"/><rect x="3.2" y="0" width="0.9" height="12" fill="#bdbdbd"/><rect x="5.9" y="1.5" width="3.3" height="9" fill="#d6d6d6"/><rect x="9.8" y="0" width="0.9" height="12" fill="#bdbdbd"/></svg>
<svg style="left:582px;top:326.5px" width="12" height="11" viewBox="0 0 12 11"><path d="M0 3.5 L1.5 2 V5 Z M0 7.5 L1.5 6 V9 Z" fill="#d6d6d6"/><rect x="4" y="0.5" width="6" height="3.5" fill="#d6d6d6"/><rect x="3" y="6.5" width="9" height="4" fill="#d6d6d6"/></svg>
<svg style="left:602px;top:326.5px" width="12" height="11" viewBox="0 0 12 11"><path d="M3.5 0 L2 1.5 H5 Z M7.5 0 L6 1.5 H9 Z" fill="#d6d6d6"/><rect x="0.5" y="3" width="4" height="8" fill="#d6d6d6"/><rect x="6.5" y="4" width="3.5" height="6" fill="#d6d6d6"/></svg>
<svg style="left:709.5px;top:327px" width="10" height="10" viewBox="0 0 10 10"><rect x="0.5" y="0.5" width="9" height="9" fill="none" stroke="#d6d6d6" stroke-width="1" stroke-dasharray="1.5 1.5"/><path d="M3 2 L8 5.5 L5.6 5.8 L6.8 8.2 L5.8 8.7 L4.6 6.3 L3 7.8 Z" fill="#d6d6d6"/></svg>
<svg style="left:719.5px;top:330.5px" width="7" height="4" viewBox="0 0 7 4"><path d="M0.6 0.5 L3.5 3.3 L6.4 0.5" fill="none" stroke="#c8c8c8" stroke-width="1.25"/></svg>
<div class="a" style="left:579px;top:260px;width:150px;height:1px;background:#474747;"></div>
<span class="t" style="left:579.5px;top:265.07px;font-size:9.5px;line-height:14.25px;height:14.25px;color:#d0d0d0;transform:scaleX(0.8427);">オブジェクトの分布 :</span>
<div class="a" style="left:579px;top:302px;width:150px;height:1px;background:#474747;"></div>
<span class="t" style="left:579.5px;top:307.38px;font-size:9.5px;line-height:14.25px;height:14.25px;color:#d0d0d0;transform:scaleX(0.8510);">等間隔に分布 :</span>
<span class="t" style="left:707px;top:307.88px;font-size:9.5px;line-height:14.25px;height:14.25px;color:#d0d0d0;transform:scaleX(0.9060);">整列 :</span>
<div class="a" style="left:690px;top:307px;width:1px;height:33px;background:#474747;"></div>
<div class="a" style="left:620.5px;top:326px;width:54.5px;height:12.5px;background:#4e4e4e;border:1px solid #474747;border-radius:2px"></div>
<svg style="left:623.0px;top:326.2px" width="7" height="12" viewBox="0 0 7 12"><path d="M0.6 4 L3.5 1 L6.4 4 M0.6 8 L3.5 11 L6.4 8" fill="none" stroke="#d8d8d8" stroke-width="1.3"/></svg>
<div class="a" style="left:633px;top:326.5px;width:41.5px;height:11.5px;background:#424242;border-radius:2px"></div>
<span class="t" style="left:635px;top:324.80px;font-size:10px;line-height:15.0px;height:15.0px;color:#d8d8d8;transform:scaleX(0.9400);">0 mm</span>
<div class="a" style="left:575px;top:344px;width:158.5px;height:1.5px;background:#3e3e3e;"></div>
<div class="a" style="left:575px;top:345.5px;width:158.5px;height:4px;background:#4c4c4c;"></div>
<div class="a" style="left:648px;top:346.5px;width:13px;height:2px;background:repeating-linear-gradient(90deg,#3a3a3a 0 1px,transparent 1px 2px)"></div>
<div class="a" style="left:611px;top:257.8px;width:77.5px;height:12.6px;background:#fdfdfd;border:1px solid #8a8a8a;box-shadow:1px 1px 1px rgba(0,0,0,.35)"></div>
<span class="t" style="left:631.5px;top:258.15px;font-size:9px;line-height:13.5px;height:13.5px;color:#4a4a4a;transform:scaleX(0.8252);">方向中央に整列</span>
<div class="a" style="left:594px;top:232px;width:35.5px;height:34.5px;background:transparent;border:7px solid #ff0000"></div>
<div class="a" style="left:733.5px;top:42px;width:2.5px;height:436px;background:#3a3a3a;"></div>
<div class="a" style="left:736px;top:42px;width:164px;height:436px;background:#535353;"></div>
<div class="a" style="left:736px;top:42px;width:164px;height:8px;background:#464646;"></div>
<svg style="left:889px;top:43.8px" width="6" height="4" viewBox="0 0 6 4"><path d="M0.2 0 V4 L2.8 2 Z M3.4 0 V4 L6 2 Z" fill="#c4c4c4"/></svg>
<div class="a" style="left:736px;top:50px;width:164px;height:18px;background:#474747;"></div>
<div class="a" style="left:777px;top:50px;width:18px;height:18px;background:#494949;"></div>
<div class="a" style="left:795px;top:50px;width:1px;height:18px;background:#3f3f3f;"></div>
<div class="a" style="left:796px;top:50px;width:19px;height:18px;background:#494949;"></div>
<div class="a" style="left:815px;top:50px;width:1px;height:18px;background:#3f3f3f;"></div>
<div class="a" style="left:816px;top:50px;width:17.5px;height:18px;background:#494949;"></div>
<div class="a" style="left:833.5px;top:50px;width:1px;height:18px;background:#3f3f3f;"></div>
<div class="a" style="left:834.5px;top:50px;width:18.5px;height:18px;background:#494949;"></div>
<div class="a" style="left:853px;top:50px;width:1px;height:18px;background:#3f3f3f;"></div>
<div class="a" style="left:854px;top:50px;width:22px;height:18px;background:#494949;"></div>
<div class="a" style="left:876px;top:50px;width:1px;height:18px;background:#3f3f3f;"></div>
<div class="a" style="left:736px;top:50px;width:40.5px;height:18.5px;background:#535353;"></div>
<span class="t" style="left:742px;top:52.88px;font-size:9.5px;line-height:14.25px;height:14.25px;color:#ececec;transform:scaleX(0.5965);">プロパティ</span>
<span class="t" style="left:782.5px;top:52.88px;font-size:9.5px;line-height:14.25px;height:14.25px;color:#a6a6a6;transform:scaleX(0.5638);">レイ·</span>
<span class="t" style="left:801px;top:52.55px;font-size:9px;line-height:13.5px;height:13.5px;color:#a6a6a6;transform:scaleX(0.8077);">CC</span>
<span class="t" style="left:820.5px;top:52.88px;font-size:9.5px;line-height:14.25px;height:14.25px;color:#a6a6a6;transform:scaleX(0.6007);">スウ:</span>
<span class="t" style="left:839.5px;top:52.88px;font-size:9.5px;line-height:14.25px;height:14.25px;color:#a6a6a6;transform:scaleX(0.6238);">ブラ:</span>
<span class="t" style="left:858.5px;top:52.88px;font-size:9.5px;line-height:14.25px;height:14.25px;color:#a6a6a6;transform:scaleX(0.6732);">シンﾌ</span>
<span class="t" style="left:742px;top:74.03px;font-size:8.5px;line-height:12.75px;height:12.75px;color:#cacaca;transform:scaleX(0.7838);">長方形</span>
<div class="a" style="left:736px;top:89px;width:164px;height:1px;background:#474747;"></div>
<span class="t" style="left:742px;top:95.33px;font-size:8.5px;line-height:12.75px;height:12.75px;color:#cacaca;transform:scaleX(0.9109);">変形</span>
<svg style="left:741.5px;top:118.5px" width="14" height="14" viewBox="0 0 14 14"><rect x="0.5" y="0.5" width="3" height="3" fill="none" stroke="#cfcfcf" stroke-width="0.9"/><rect x="0.5" y="5.5" width="3" height="3" fill="none" stroke="#cfcfcf" stroke-width="0.9"/><rect x="0.5" y="10.5" width="3" height="3" fill="none" stroke="#cfcfcf" stroke-width="0.9"/><rect x="5.5" y="0.5" width="3" height="3" fill="none" stroke="#cfcfcf" stroke-width="0.9"/><rect x="5" y="5" width="4" height="4" fill="#f0f0f0"/><rect x="5.5" y="10.5" width="3" height="3" fill="none" stroke="#cfcfcf" stroke-width="0.9"/><rect x="10.5" y="0.5" width="3" height="3" fill="none" stroke="#cfcfcf" stroke-width="0.9"/><rect x="10.5" y="5.5" width="3" height="3" fill="none" stroke="#cfcfcf" stroke-width="0.9"/><rect x="10.5" y="10.5" width="3" height="3" fill="none" stroke="#cfcfcf" stroke-width="0.9"/><path d="M3.5 2 H5.5 M8.5 2 H10.5 M3.5 12 H5.5 M8.5 12 H10.5 M2 3.5 V5.5 M2 8.5 V10.5 M12 3.5 V5.5 M12 8.5 V10.5" stroke="#cfcfcf" stroke-width="0.8"/></svg>
<span class="t" style="left:765px;top:112.00px;font-size:8px;line-height:12.0px;height:12.0px;color:#c4c4c4;transform:scaleX(0.9201);">X :</span>
<div class="a" style="left:777px;top:111.5px;width:36.5px;height:12.5px;background:#3b3b3b;border-radius:2px;border:1px solid #484848"></div>
<span class="t" style="left:780.5px;top:111.35px;font-size:9.8px;line-height:14.700000000000001px;height:14.700000000000001px;color:#ececec;transform:scaleX(0.8610);-webkit-text-stroke:0.3px #ececec">144.286</span>
<span class="t" style="left:823.5px;top:112.00px;font-size:8px;line-height:12.0px;height:12.0px;color:#c4c4c4;transform:scaleX(0.9583);">W :</span>
<div class="a" style="left:837.5px;top:111.5px;width:36.5px;height:12.5px;background:#3b3b3b;border-radius:2px;border:1px solid #484848"></div>
<span class="t" style="left:840.5px;top:111.35px;font-size:9.8px;line-height:14.700000000000001px;height:14.700000000000001px;color:#ececec;transform:scaleX(0.8900);-webkit-text-stroke:0.3px #ececec">49.601 r</span>
<span class="t" style="left:765px;top:129.00px;font-size:8px;line-height:12.0px;height:12.0px;color:#c4c4c4;transform:scaleX(0.9335);">Y :</span>
<div class="a" style="left:777px;top:128.5px;width:36.5px;height:12.5px;background:#3b3b3b;border-radius:2px;border:1px solid #484848"></div>
<span class="t" style="left:780.5px;top:128.35px;font-size:9.8px;line-height:14.700000000000001px;height:14.700000000000001px;color:#ececec;transform:scaleX(0.8622);-webkit-text-stroke:0.3px #ececec">104.29 r</span>
<span class="t" style="left:824.5px;top:129.00px;font-size:8px;line-height:12.0px;height:12.0px;color:#c4c4c4;transform:scaleX(1.0260);">H :</span>
<div class="a" style="left:837.5px;top:128.5px;width:36.5px;height:12.5px;background:#3b3b3b;border-radius:2px;border:1px solid #484848"></div>
<span class="t" style="left:840.5px;top:128.35px;font-size:9.8px;line-height:14.700000000000001px;height:14.700000000000001px;color:#ececec;transform:scaleX(0.8900);-webkit-text-stroke:0.3px #ececec">102.57 r</span>
<svg style="left:881px;top:119.5px" width="11" height="14" viewBox="0 0 11 14"><rect x="3" y="1" width="4.5" height="6" rx="2.2" fill="none" stroke="#d4d4d4" stroke-width="1.2" transform="rotate(-20 5 4)"/><rect x="4" y="7" width="4.5" height="6" rx="2.2" fill="none" stroke="#d4d4d4" stroke-width="1.2" transform="rotate(-20 6 10)"/><path d="M1 1.5 L10 12.5" stroke="#d4d4d4" stroke-width="1.1"/></svg>
<svg style="left:761px;top:147px" width="9" height="6" viewBox="0 0 9 6"><path d="M8.5 5.5 H0.8 L6 0.5" fill="none" stroke="#c8c8c8" stroke-width="1"/><path d="M4 5.5 Q4.2 3.6 3 2.8" fill="none" stroke="#c8c8c8" stroke-width="0.8"/></svg>
<span class="t" style="left:770.5px;top:144.25px;font-size:9px;line-height:13.5px;height:13.5px;color:#c8c8c8;transform:scaleX(0.5963);">:</span>
<div class="a" style="left:773.5px;top:145.5px;width:36px;height:12.5px;background:#535353;border-radius:2px;border:1px solid #484848"></div>
<div class="a" style="left:774px;top:146px;width:23px;height:11.5px;background:#3b3b3b;border-radius:2px 0 0 2px"></div>
<span class="t" style="left:775.5px;top:145.25px;font-size:9.8px;line-height:14.700000000000001px;height:14.700000000000001px;color:#e4e4e4;transform:scaleX(1.0133);">0°</span>
<svg style="left:799.5px;top:149.5px" width="7" height="4" viewBox="0 0 7 4"><path d="M0.6 0.5 L3.5 3.3 L6.4 0.5" fill="none" stroke="#d8d8d8" stroke-width="1.25"/></svg>
<svg style="left:834px;top:148px" width="10" height="9" viewBox="0 0 10 9"><path d="M0 0.5 L3.6 4.5 L0 8.5 Z M10 0.5 L6.4 4.5 L10 8.5 Z" fill="#cfcfcf"/><path d="M5 0 V9" stroke="#cfcfcf" stroke-width="0.9" stroke-dasharray="1.5 1"/></svg>
<svg style="left:854px;top:147.5px" width="9" height="10" viewBox="0 0 9 10"><path d="M0.5 0 L4.5 3.6 L8.5 0 Z M0.5 10 L4.5 6.4 L8.5 10 Z" fill="#cfcfcf"/><path d="M0 5 H9" stroke="#cfcfcf" stroke-width="0.9" stroke-dasharray="1.5 1"/></svg>
<svg style="left:882.5px;top:165px" width="9" height="2" viewBox="0 0 9 2"><circle cx="1" cy="1" r="0.95" fill="#dcdcdc"/><circle cx="4.5" cy="1" r="0.95" fill="#dcdcdc"/><circle cx="8" cy="1" r="0.95" fill="#dcdcdc"/></svg>
<div class="a" style="left:736px;top:174.5px;width:164px;height:1px;background:#474747;"></div>
<span class="t" style="left:742.5px;top:182.72px;font-size:8.5px;line-height:12.75px;height:12.75px;color:#d0d0d0;transform:scaleX(0.7671);">アピアランス</span>
<div class="a" style="left:742px;top:200.5px;width:12.5px;height:11.7px;background:#484848;border:1px solid #707070"></div>
<span class="t" style="left:745.8px;top:197.97px;font-size:11.5px;line-height:17.25px;height:17.25px;color:#e8e8e8;transform:scaleX(0.8585);">?</span>
<span class="t" style="left:761.5px;top:200.82px;font-size:8.5px;line-height:12.75px;height:12.75px;color:#d8d8d8;font-weight:500;transform:scaleX(0.7934);">塗り</span>
<div class="a" style="left:742px;top:219.5px;width:12px;height:11.5px;background:#000;border:1px solid #d4d4d4;border-radius:1px"></div>
<div class="a" style="left:745.5px;top:223px;width:5px;height:4.5px;background:#000;border:1px solid #d8d8d8"></div>
<span class="t" style="left:762px;top:219.82px;font-size:8.5px;line-height:12.75px;height:12.75px;color:#d8d8d8;font-weight:500;transform:scaleX(0.8807);">線</span>
<div class="a" style="left:795.5px;top:218.5px;width:44px;height:13px;background:#535353;border:1px solid #4a4a4a;border-radius:2px"></div>
<svg style="left:797.0px;top:219px" width="7" height="12" viewBox="0 0 7 12"><path d="M0.6 4 L3.5 1 L6.4 4 M0.6 8 L3.5 11 L6.4 8" fill="none" stroke="#d8d8d8" stroke-width="1.3"/></svg>
<div class="a" style="left:806.5px;top:219px;width:21.5px;height:12px;background:#3b3b3b;"></div>
<span class="t" style="left:809.5px;top:218.65px;font-size:9.8px;line-height:14.700000000000001px;height:14.700000000000001px;color:#e4e4e4;transform:scaleX(1.0402);">1 pt</span>
<svg style="left:830.5px;top:223px" width="7" height="4" viewBox="0 0 7 4"><path d="M0.6 0.5 L3.5 3.3 L6.4 0.5" fill="none" stroke="#d8d8d8" stroke-width="1.25"/></svg>
<svg style="left:742px;top:239px" width="12" height="12" viewBox="0 0 12 12"><rect x="0.5" y="0.5" width="11" height="11" fill="#5a5a5a" stroke="#8a8a8a" stroke-width="1"/><path d="M1 1 H3.5 V3.5 H1 Z M6 1 H8.5 V3.5 H6 Z M3.5 3.5 H6 V6 H3.5 Z M8.5 3.5 H11 V6 H8.5 Z M1 6 H3.5 V8.5 H1 Z M6 6 H8.5 V8.5 H6 Z M3.5 8.5 H6 V11 H3.5 Z M8.5 8.5 H11 V11 H8.5 Z" fill="#747474"/></svg>
<span class="t" style="left:761.5px;top:239.12px;font-size:8.5px;line-height:12.75px;height:12.75px;color:#d8d8d8;font-weight:500;transform:scaleX(0.7791);">不透明度</span>
<div class="a" style="left:795.5px;top:238px;width:44px;height:13px;background:#535353;border:1px solid #4a4a4a;border-radius:2px"></div>
<div class="a" style="left:796px;top:238.5px;width:32px;height:12px;background:#3b3b3b;"></div>
<span class="t" style="left:798px;top:237.85px;font-size:9.8px;line-height:14.700000000000001px;height:14.700000000000001px;color:#e4e4e4;transform:scaleX(0.8379);">100%</span>
<svg style="left:832.3px;top:241.7px" width="4" height="6" viewBox="0 0 4 6"><path d="M0.6 0.5 L3.3 3 L0.6 5.5" fill="none" stroke="#dcdcdc" stroke-width="1.25"/></svg>
<span class="t" style="left:746.5px;top:256.00px;font-size:10px;line-height:15.0px;height:15.0px;color:#d0d0d0;font-family:'Liberation Serif',serif;transform:scaleX(1.0289);font-style:italic">fx.</span>
<svg style="left:882.5px;top:278px" width="9" height="2" viewBox="0 0 9 2"><circle cx="1" cy="1" r="0.95" fill="#dcdcdc"/><circle cx="4.5" cy="1" r="0.95" fill="#dcdcdc"/><circle cx="8" cy="1" r="0.95" fill="#dcdcdc"/></svg>
<div class="a" style="left:736px;top:288.5px;width:164px;height:1px;background:#474747;"></div>
<span class="t" style="left:742px;top:296.12px;font-size:8.5px;line-height:12.75px;height:12.75px;color:#d0d0d0;transform:scaleX(0.8522);">整列</span>
<svg style="left:744.5px;top:316px" width="10" height="10" viewBox="0 0 10 10"><rect x="0.5" y="0.5" width="9" height="9" fill="none" stroke="#d6d6d6" stroke-width="1" stroke-dasharray="1.5 1.5"/><path d="M3 2 L8 5.5 L5.6 5.8 L6.8 8.2 L5.8 8.7 L4.6 6.3 L3 7.8 Z" fill="#d6d6d6"/></svg>
<svg style="left:755.5px;top:319.5px" width="7" height="4" viewBox="0 0 7 4"><path d="M0.6 0.5 L3.5 3.3 L6.4 0.5" fill="none" stroke="#c8c8c8" stroke-width="1.25"/></svg>
<svg style="left:769.81px;top:315.0px" width="10.38" height="12" viewBox="0 0 10.38 12"><rect x="0.0" y="0" width="0.97" height="12" fill="#bdbdbd"/><rect x="1.746" y="7" width="8.633000000000001" height="3.5" fill="#d6d6d6"/><rect x="1.746" y="2.2" width="5.044" height="3.5" fill="#d6d6d6"/></svg>
<svg style="left:788.81px;top:315.0px" width="10.38" height="12" viewBox="0 0 10.38 12"><rect x="4.7044999999999995" y="0" width="0.97" height="12" fill="#bdbdbd"/><rect x="0.0" y="7" width="10.379" height="3.5" fill="#d6d6d6"/><rect x="1.94" y="2.2" width="6.499" height="3.5" fill="#d6d6d6"/></svg>
<svg style="left:808.81px;top:315.0px" width="10.38" height="12" viewBox="0 0 10.38 12"><rect x="9.408999999999999" y="0" width="0.97" height="12" fill="#bdbdbd"/><rect x="0.0" y="7" width="8.633000000000001" height="3.5" fill="#d6d6d6"/><rect x="3.589" y="2.2" width="5.044" height="3.5" fill="#d6d6d6"/></svg>
<svg style="left:828.0px;top:315.65px" width="12" height="10.7" viewBox="0 0 12 10.7"><rect x="0" y="0" width="12" height="1" fill="#bdbdbd"/><rect x="2.2" y="1.8" width="3.5" height="8.9" fill="#d6d6d6"/><rect x="7" y="1.8" width="3.5" height="5.2" fill="#d6d6d6"/></svg>
<svg style="left:848.0px;top:315.65px" width="12" height="10.7" viewBox="0 0 12 10.7"><rect x="0" y="4.85" width="12" height="1" fill="#bdbdbd"/><rect x="2.2" y="0" width="3.5" height="10.7" fill="#d6d6d6"/><rect x="7" y="2" width="3.5" height="6.7" fill="#d6d6d6"/></svg>
<svg style="left:867.5px;top:315.65px" width="12" height="10.7" viewBox="0 0 12 10.7"><rect x="0" y="9.7" width="12" height="1" fill="#bdbdbd"/><rect x="2.2" y="0" width="3.5" height="8.9" fill="#d6d6d6"/><rect x="7" y="3.7" width="3.5" height="5.2" fill="#d6d6d6"/></svg>
<svg style="left:882.5px;top:337px" width="9" height="2" viewBox="0 0 9 2"><circle cx="1" cy="1" r="0.95" fill="#dcdcdc"/><circle cx="4.5" cy="1" r="0.95" fill="#dcdcdc"/><circle cx="8" cy="1" r="0.95" fill="#dcdcdc"/></svg>
<div class="a" style="left:736px;top:347px;width:164px;height:1px;background:#474747;"></div>
<span class="t" style="left:742px;top:354.52px;font-size:8.5px;line-height:12.75px;height:12.75px;color:#d0d0d0;transform:scaleX(0.7792);">パスファインダー</span>
<svg style="left:746px;top:374.5px" width="10" height="10" viewBox="0 0 10 10"><rect x="0" y="0" width="7" height="7" fill="#d6d6d6"/><rect x="3" y="3" width="7" height="7" fill="#d6d6d6"/></svg>
<svg style="left:766.5px;top:374.5px" width="10" height="10" viewBox="0 0 10 10"><rect x="0" y="0" width="7" height="7" fill="#d6d6d6"/><rect x="3" y="3" width="7" height="7" fill="#535353" stroke="#d6d6d6" stroke-width="1"/></svg>
<svg style="left:787px;top:374.5px" width="10" height="10" viewBox="0 0 10 10"><rect x="0.5" y="0.5" width="6.5" height="6.5" fill="none" stroke="#d6d6d6" stroke-width="1"/><rect x="3" y="3" width="6.5" height="6.5" fill="none" stroke="#d6d6d6" stroke-width="1"/><rect x="3" y="3" width="4" height="4" fill="#d6d6d6"/></svg>
<svg style="left:807px;top:374.5px" width="10" height="10" viewBox="0 0 10 10"><rect x="0" y="0" width="7" height="7" fill="#d6d6d6"/><rect x="3" y="3" width="7" height="7" fill="#d6d6d6"/><rect x="3.5" y="3.5" width="3" height="3" fill="#535353"/></svg>
<div class="a" style="left:867.5px;top:373px;width:27px;height:13px;background:#595959;border-radius:2px"></div>
<span class="t" style="left:874.5px;top:374.02px;font-size:8.5px;line-height:12.75px;height:12.75px;color:#747474;transform:scaleX(0.7934);">拡張</span>
<svg style="left:882.5px;top:392.7px" width="9" height="2" viewBox="0 0 9 2"><circle cx="1" cy="1" r="0.95" fill="#dcdcdc"/><circle cx="4.5" cy="1" r="0.95" fill="#dcdcdc"/><circle cx="8" cy="1" r="0.95" fill="#dcdcdc"/></svg>
<div class="a" style="left:736px;top:402.5px;width:164px;height:1px;background:#474747;"></div>
<span class="t" style="left:742px;top:413.72px;font-size:8.5px;line-height:12.75px;height:12.75px;color:#d0d0d0;transform:scaleX(0.7841);">クイック操作</span>
<div class="a" style="left:742px;top:430px;width:66.5px;height:14.5px;background:transparent;border:1px solid #7c7c7c;border-radius:2px"></div>
<span class="t" style="left:762px;top:431.85px;font-size:9px;line-height:13.5px;height:13.5px;color:#f0f0f0;font-weight:700;transform:scaleX(0.7330);">グループ</span>
<div class="a" style="left:815px;top:430px;width:66.5px;height:14.5px;background:transparent;border:1px solid #7c7c7c;border-radius:2px"></div>
<span class="t" style="left:831px;top:431.85px;font-size:9px;line-height:13.5px;height:13.5px;color:#f0f0f0;font-weight:700;transform:scaleX(0.7553);">カラー変更</span>

</body></html>
